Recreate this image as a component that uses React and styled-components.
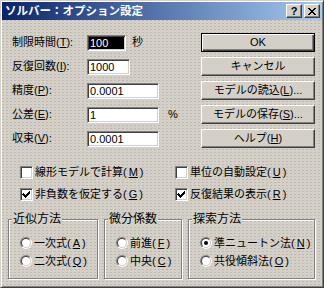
import React from "react";
import styled, { createGlobalStyle } from "styled-components";

const face = "#d4d0c8";

const GlobalStyle = createGlobalStyle`
  html, body { margin: 0; padding: 0; background: ${face}; }
  body {
    font-family: "Liberation Sans", "Noto Sans CJK JP", sans-serif;
    font-size: 11px;
    color: #000;
  }
  * { box-sizing: border-box; }
`;

// outer dialog frame
const Window = styled.div`
  width: 324px;
  height: 288px;
  padding: 1px;
  background-color: ${face};
  background-image: radial-gradient(circle, #bdb9b1 0.55px, transparent 0.75px);
  background-size: 4px 3px;
  border: 1px solid;
  border-color: ${face} #404040 #404040 ${face};
  box-shadow: inset 1px 1px #fff, inset -1px -1px #808080;
  display: flex;
  flex-direction: column;
`;

const TitleBar = styled.div`
  height: 18px;
  display: flex;
  align-items: center;
  gap: 2px;
  padding: 0 2px 0 3px;
  background: linear-gradient(to right, #0a246a, #a6caf0);
  color: #fff;
  font-weight: bold;
  font-size: 11.5px;
  line-height: 14px;
`;

const Title = styled.span`
  flex: 1;
  white-space: nowrap;
`;

const TitleButton = styled.div`
  width: 16px;
  height: 14px;
  display: flex;
  align-items: center;
  justify-content: center;
  background: ${face};
  border: 1px solid;
  border-color: #fff #404040 #404040 #fff;
  box-shadow: inset -1px -1px #808080;
  color: #000;
  font-family: "Liberation Sans", sans-serif;
  font-weight: bold;
  font-size: 11px;
  line-height: 11px;
`;

const Body = styled.div`
  flex: 1;
  padding: 13px 7px 0 6px;
  display: flex;
  flex-direction: column;
`;

const Top = styled.div`
  display: flex;
  justify-content: space-between;
`;

const Form = styled.div`
  margin-left: 4px;
  display: grid;
  grid-template-columns: 75px auto;
  grid-auto-rows: 19px;
  row-gap: 5px;
  align-items: center;
`;

const Label = styled.span`
  white-space: nowrap;
  line-height: 13px;
`;

const Field = styled.div`
  display: flex;
  align-items: center;
  gap: ${(p) => p.$gap || 6}px;
`;

const Input = styled.div`
  width: ${(p) => p.$w}px;
  height: 16px;
  padding: 1px 2px 0;
  border: 1px solid;
  border-color: #808080 #fff #fff #808080;
  box-shadow: inset 1px 1px #404040, inset -1px -1px ${face};
  background: ${(p) => (p.$selected ? "#000" : "#fff")};
  color: ${(p) => (p.$selected ? "#fff" : "#000")};
  font-size: 11px;
  line-height: 13px;
  white-space: nowrap;
  overflow: hidden;
`;

const Unit = styled.span`
  line-height: 13px;
`;

const Buttons = styled.div`
  width: 114px;
  display: flex;
  flex-direction: column;
  gap: 5px;
`;

const Button = styled.div`
  height: 19px;
  display: flex;
  align-items: center;
  justify-content: center;
  background: ${face};
  border: 1px solid;
  border-color: ${(p) => (p.$default ? "#000 #000 #000 #000" : "#fff #404040 #404040 #fff")};
  box-shadow: ${(p) =>
    p.$default
      ? "inset 1px 1px #fff, inset -1px -1px #404040, inset -2px -2px #808080"
      : "inset -1px -1px #808080"};
  line-height: 13px;
  white-space: nowrap;
`;

const Options = styled.div`
  margin: 18px 0 0 12px;
  display: grid;
  grid-template-columns: 155px 1fr;
  grid-auto-rows: 13px;
  row-gap: 9px;
`;

const Check = styled.label`
  display: flex;
  align-items: center;
  gap: 2px;
  line-height: 13px;
  white-space: nowrap;
`;

const Box = styled.span`
  width: 13px;
  height: 13px;
  flex: none;
  display: flex;
  align-items: center;
  justify-content: center;
  background: #fff;
  border: 1px solid;
  border-color: #808080 #fff #fff #808080;
  box-shadow: inset 1px 1px #404040, inset -1px -1px ${face};
`;

const Groups = styled.div`
  margin-top: 12px;
  display: flex;
  gap: 6px;
`;

const Group = styled.fieldset`
  margin: 0;
  width: ${(p) => (p.$w ? `${p.$w}px` : "auto")};
  flex: ${(p) => (p.$w ? "none" : "1")};
  height: 66px;
  padding: 0;
  border: 1px solid #808080;
  box-shadow: inset 1px 1px #fff, 1px 1px #fff;
  display: flex;
  flex-direction: column;
`;

const Legend = styled.legend`
  margin-left: 3px;
  padding: 0 1px;
  font-size: 12px;
  line-height: 12px;
  background: ${face};
`;

const Radios = styled.div`
  padding: 12px 0 0 11px;
  display: flex;
  flex-direction: column;
  gap: 6px;
`;

const Radio = styled.label`
  display: flex;
  align-items: center;
  gap: 2px;
  height: 12px;
  line-height: 13px;
  white-space: nowrap;
`;

const Ring = styled.span`
  width: 12px;
  height: 12px;
  flex: none;
  border-radius: 50%;
  border: 1px solid;
  border-color: #808080 #fff #fff #808080;
  display: flex;
`;

const RingInner = styled.span`
  flex: 1;
  border-radius: 50%;
  border: 1px solid;
  border-color: #404040 ${face} ${face} #404040;
  background: #fff;
  display: flex;
  align-items: center;
  justify-content: center;
`;

const Dot = styled.span`
  width: 4px;
  height: 4px;
  border-radius: 50%;
  background: #000;
`;

const CheckMark = () => (
  <svg width="9" height="9" viewBox="0 0 9 9" shapeRendering="crispEdges">
    <path d="M1 3h1v1h1v1h1v-1h1v-1h1v-1h1v-1h1v3h-1v1h-1v1h-1v1h-1v1h-1v-1h-1v-1h-1v-1h-1z" fill="#000" />
  </svg>
);

const CloseGlyph = () => (
  <svg width="8" height="7" viewBox="0 0 8 7" shapeRendering="crispEdges">
    <path d="M0 0h2v1h1v1h2v-1h1v-1h2v1h-1v1h-1v1h-1v1h1v1h1v1h1v1h-2v-1h-1v-1h-2v1h-1v1h-2v-1h1v-1h1v-1h1v-1h-1v-1h-1v-1h-1z" fill="#000" />
  </svg>
);

const Key = ({ k }) => (
  <>
    (<u>{k}</u>)
  </>
);

const fields = [
  { label: "制限時間", k: "T", value: "100", w: 39, unit: "秒", selected: true },
  { label: "反復回数", k: "I", value: "1000", w: 43 },
  { label: "精度", k: "P", value: "0.0001", w: 72 },
  { label: "公差", k: "E", value: "1", w: 72, unit: "%", gap: 9 },
  { label: "収束", k: "V", value: "0.0001", w: 72 },
];

const buttons = [
  { text: "OK", def: true },
  { text: "キャンセル" },
  { text: "モデルの読込", k: "L", dots: true },
  { text: "モデルの保存", k: "S", dots: true },
  { text: "ヘルプ", k: "H" },
];

const checks = [
  { text: "線形モデルで計算", k: "M", on: false },
  { text: "単位の自動設定", k: "U", on: false },
  { text: "非負数を仮定する", k: "G", on: true },
  { text: "反復結果の表示", k: "R", on: true },
];

const groups = [
  { title: "近似方法", w: 90, items: [{ t: "一次式", k: "A" }, { t: "二次式", k: "Q" }] },
  { title: "微分係数", w: 78, items: [{ t: "前進", k: "F" }, { t: "中央", k: "C" }] },
  { title: "探索方法", items: [{ t: "準ニュートン法", k: "N", on: true }, { t: "共役傾斜法", k: "O" }] },
];

export default function App() {
  return (
    <>
      <GlobalStyle />
      <Window>
        <TitleBar>
          <Title>ソルバー：オプション設定</Title>
          <TitleButton>?</TitleButton>
          <TitleButton>
            <CloseGlyph />
          </TitleButton>
        </TitleBar>
        <Body>
          <Top>
            <Form>
              {fields.map((f) => (
                <React.Fragment key={f.label}>
                  <Label>
                    {f.label}
                    <Key k={f.k} />:
                  </Label>
                  <Field $gap={f.gap}>
                    <Input $w={f.w} $selected={f.selected}>
                      {f.value}
                    </Input>
                    {f.unit && <Unit>{f.unit}</Unit>}
                  </Field>
                </React.Fragment>
              ))}
            </Form>
            <Buttons>
              {buttons.map((b) => (
                <Button key={b.text} $default={b.def}>
                  {b.text}
                  {b.k && <Key k={b.k} />}
                  {b.dots && "..."}
                </Button>
              ))}
            </Buttons>
          </Top>
          <Options>
            {checks.map((c) => (
              <Check key={c.text}>
                <Box>{c.on && <CheckMark />}</Box>
                {c.text}
                <Key k={c.k} />
              </Check>
            ))}
          </Options>
          <Groups>
            {groups.map((g) => (
              <Group key={g.title} $w={g.w}>
                <Legend>{g.title}</Legend>
                <Radios>
                  {g.items.map((it) => (
                    <Radio key={it.t}>
                      <Ring>
                        <RingInner>{it.on && <Dot />}</RingInner>
                      </Ring>
                      {it.t}
                      <Key k={it.k} />
                    </Radio>
                  ))}
                </Radios>
              </Group>
            ))}
          </Groups>
        </Body>
      </Window>
    </>
  );
}
